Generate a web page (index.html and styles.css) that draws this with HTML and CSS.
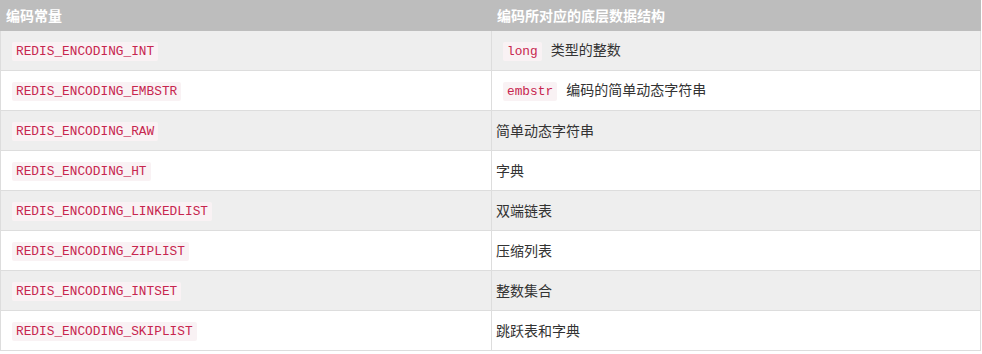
FILE: index.html
```html
<!DOCTYPE html>
<html lang="zh">
<head>
<meta charset="utf-8">
<link rel="stylesheet" href="styles.css">
</head>
<body>
<table class="enc-table">
  <thead>
    <tr><th class="col-a">编码常量</th><th>编码所对应的底层数据结构</th></tr>
  </thead>
  <tbody>
    <tr><td><code>REDIS_ENCODING_INT</code></td><td><code>long</code> 类型的整数</td></tr>
    <tr><td><code>REDIS_ENCODING_EMBSTR</code></td><td><code>embstr</code> 编码的简单动态字符串</td></tr>
    <tr><td><code>REDIS_ENCODING_RAW</code></td><td>简单动态字符串</td></tr>
    <tr><td><code>REDIS_ENCODING_HT</code></td><td>字典</td></tr>
    <tr><td><code>REDIS_ENCODING_LINKEDLIST</code></td><td>双端链表</td></tr>
    <tr><td><code>REDIS_ENCODING_ZIPLIST</code></td><td>压缩列表</td></tr>
    <tr><td><code>REDIS_ENCODING_INTSET</code></td><td>整数集合</td></tr>
    <tr><td><code>REDIS_ENCODING_SKIPLIST</code></td><td>跳跃表和字典</td></tr>
  </tbody>
</table>
</body>
</html>
```
FILE: styles.css
```css
html, body {
  margin: 0;
  padding: 0;
  background: #fff;
}
body {
  font-family: "Noto Sans CJK SC", "Liberation Sans", sans-serif;
  font-size: 14px;
  color: #333;
}
.enc-table {
  border-collapse: collapse;
  width: 981px;
  table-layout: fixed;
}
.enc-table th {
  background: #bdbdbd;
  color: #fff;
  font-weight: bold;
  text-align: left;
  height: 30px;
  padding: 0 5px;
  line-height: 16px;
  box-sizing: border-box;
  border: 1px solid #bdbdbd;
  border-top: 0;
}
.enc-table .col-a {
  width: 491px;
}
.enc-table td {
  height: 40px;
  padding: 0 4px;
  box-sizing: border-box;
  border: 1px solid #ddd;
  line-height: 20px;
  vertical-align: middle;
}
.enc-table tbody tr:nth-child(odd) td {
  background: #eee;
}
.enc-table code {
  font-family: "Liberation Mono", "DejaVu Sans Mono", monospace;
  font-size: 12.8px;
  color: #c7254e;
  background: #f9f2f4;
  padding: 2px 4px;
  margin: 0 6px 0 7px;
  border-radius: 2px;
}
```
